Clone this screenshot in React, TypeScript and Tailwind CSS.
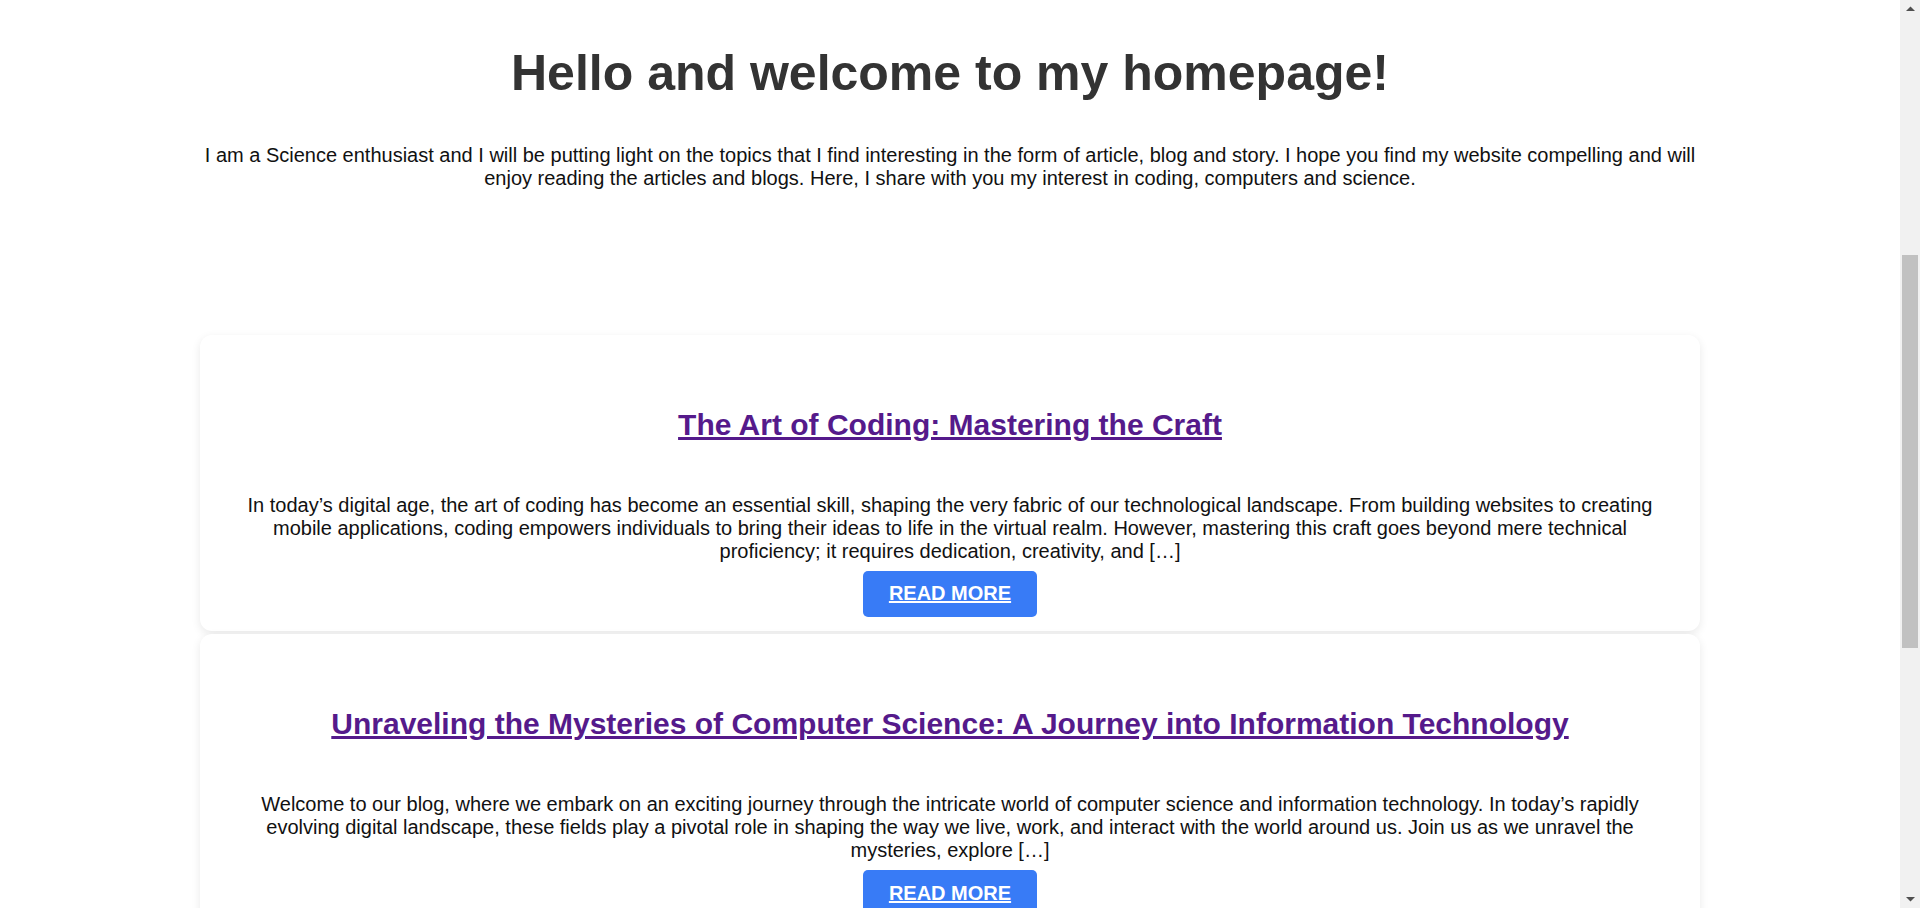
import React from "react";

const posts = [
  {
    title: "The Art of Coding: Mastering the Craft",
    body: "In today’s digital age, the art of coding has become an essential skill, shaping the very fabric of our technological landscape. From building websites to creating mobile applications, coding empowers individuals to bring their ideas to life in the virtual realm. However, mastering this craft goes beyond mere technical proficiency; it requires dedication, creativity, and […]",
  },
  {
    title: "Unraveling the Mysteries of Computer Science: A Journey into Information Technology",
    body: "Welcome to our blog, where we embark on an exciting journey through the intricate world of computer science and information technology. In today’s rapidly evolving digital landscape, these fields play a pivotal role in shaping the way we live, work, and interact with the world around us. Join us as we unravel the mysteries, explore […]",
  },
];

function Card({ title, body }: { title: string; body: string }) {
  return (
    <article className="flex flex-col items-center rounded-[12px] bg-white px-10 pt-[73.4px] pb-[14.2px] shadow-[0_3px_10px_rgba(0,0,0,0.09)]">
      <h2 className="text-center text-[30px] font-bold leading-[34.5px]">
        <a href="#" className="text-[#551a8b] underline">
          {title}
        </a>
      </h2>
      <p className="mt-[51.4px] text-center text-[20px] leading-[23px] text-[#111]">{body}</p>
      <a
        href="#"
        className="mt-[7.7px] flex h-[46px] items-center rounded-[5px] bg-[#387bf6] px-[26px] text-[20px] font-bold leading-[23px] text-white underline"
      >
        READ MORE
      </a>
    </article>
  );
}

function Scrollbar() {
  return (
    <div className="flex h-full w-[20px] shrink-0 flex-col bg-[#f1f1f1]">
      <div className="flex h-[17px] items-center justify-center">
        <svg width="9" height="5" viewBox="0 0 9 5">
          <path d="M0 5 L4.5 0.5 L9 5 Z" fill="#505050" />
        </svg>
      </div>
      <div className="flex-1 px-[2px]">
        <div className="mt-[238px] h-[393px] w-full bg-[#c1c1c1]" />
      </div>
      <div className="flex h-[17px] items-center justify-center">
        <svg width="9" height="5" viewBox="0 0 9 5">
          <path d="M0 0 L4.5 4.5 L9 0 Z" fill="#505050" />
        </svg>
      </div>
    </div>
  );
}

export default function App() {
  return (
    <div
      className="flex h-[908px] w-full overflow-hidden bg-white"
      style={{ fontFamily: '"Liberation Sans", Arial, sans-serif' }}
    >
      <main className="min-w-0 flex-1 overflow-hidden">
        <div className="ml-[200px] w-[1500px] pt-[45px]">
          <h1 className="text-center text-[50px] font-bold leading-[57.5px] text-[#333]">
            Hello and welcome to my homepage!
          </h1>
          <p className="mt-[41px] text-center text-[20px] leading-[23px] text-[#111]">
            I am a Science enthusiast and I will be putting light on the topics that I find interesting in the form of
            article, blog and story. I hope you find my website compelling and will enjoy reading the articles and
            blogs. Here, I share with you my interest in coding, computers and science.
          </p>
          <div className="mt-[145.4px] flex flex-col gap-[3px]">
            {posts.map((p) => (
              <Card key={p.title} title={p.title} body={p.body} />
            ))}
          </div>
        </div>
      </main>
      <Scrollbar />
    </div>
  );
}
